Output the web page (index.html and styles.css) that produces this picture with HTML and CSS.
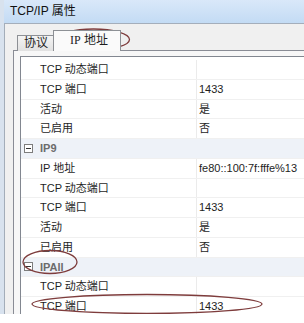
FILE: index.html
```html
<!DOCTYPE html>
<html lang="zh-CN">
<head>
    <meta charset="UTF-8">
    <title>TCP/IP 属性</title>
    <link rel="stylesheet" href="styles.css">
</head>
<body>

<div class="window">
    <div class="titlebar">TCP/IP 属性</div>
    <div class="dialog">
        <div class="tabs">
            <div class="tab">协议</div>
            <div class="tab active"><span class="latin">IP</span> 地址</div>
        </div>
        <div class="panel">
            <div class="grid">
                <div class="row"><div class="name">TCP 动态端口</div><div class="value"></div></div>
                <div class="row"><div class="name">TCP 端口</div><div class="value">1433</div></div>
                <div class="row"><div class="name">活动</div><div class="value">是</div></div>
                <div class="row"><div class="name">已启用</div><div class="value">否</div></div>

                <div class="row category"><span class="toggle"></span>IP9</div>
                <div class="row"><div class="name">IP 地址</div><div class="value">fe80::100:7f:fffe%13</div></div>
                <div class="row"><div class="name">TCP 动态端口</div><div class="value"></div></div>
                <div class="row"><div class="name">TCP 端口</div><div class="value">1433</div></div>
                <div class="row"><div class="name">活动</div><div class="value">是</div></div>
                <div class="row"><div class="name">已启用</div><div class="value">否</div></div>

                <div class="row category"><span class="toggle"></span>IPAll</div>
                <div class="row"><div class="name">TCP 动态端口</div><div class="value"></div></div>
                <div class="row"><div class="name">TCP 端口</div><div class="value">1433</div></div>
            </div>
        </div>
    </div>

    <!-- hand-drawn marks over the screenshot -->
    <svg class="marks" width="304" height="323" viewBox="0 0 304 323">
        <ellipse cx="93.5" cy="39.5" rx="36" ry="10.5"></ellipse>
        <ellipse cx="50" cy="262" rx="27" ry="11.5"></ellipse>
        <ellipse cx="147" cy="304" rx="115" ry="9.5"></ellipse>
    </svg>
</div>

</body>
</html>
```

FILE: styles.css
```css
body {
    margin: 0;
    background-color: #fff;
    font-family: 'Liberation Sans', 'Noto Sans CJK SC', sans-serif;
    color: #1e1e1e;
}
.window {
    position: relative;
    width: 304px;
    height: 314px;
    overflow: hidden;
    border-left: 4px solid #d8e2ee;
    box-sizing: border-box;
}
.titlebar {
    height: 24px;
    line-height: 23px;
    padding-left: 6px;
    font-size: 12px;
    color: #111;
    background: linear-gradient(#d9e8f9, #c3dbf4);
    border-bottom: 1px solid #a4aebb;
    box-sizing: border-box;
}
.dialog {
    height: 290px;
    background-color: #f0f0f0;
    border-left: 1px solid #a3adb9;
    padding-left: 8px;
}
.tabs {
    display: flex;
    align-items: flex-end;
    height: 27px;
    padding-left: 4px;
}
.tab {
    height: 15px;
    line-height: 15px;
    padding: 0 6px;
    font-size: 12px;
    border: 1px solid #8d9095;
    border-bottom: none;
    background: linear-gradient(#f4f4f4, #e1e1e1);
}
.tab.active {
    height: 20px;
    line-height: 18px;
    margin-left: -2px;
    padding: 0 12px 0 16px;
    background: #fafafa;
    position: relative;
    z-index: 1;
}
.latin {
    font-family: 'Liberation Serif', serif;
}
.panel {
    height: 263px;
    background-color: #f7f7f7;
    border-top: 1px solid #898c95;
    border-left: 1px solid #898c95;
    padding: 5px 0 0 6px;
    margin-top: -1px;
}
.grid {
    height: 100%;
    background-color: #fff;
    border-top: 1px solid #828790;
    border-left: 1px solid #828790;
    padding-top: 3px;
    font-size: 11px;
}
.row {
    display: grid;
    grid-template-columns: 175px 1fr;
    height: 19.75px;
    box-sizing: border-box;
    border-bottom: 1px solid #f0f0f0;
    line-height: 18px;
}
.name {
    padding-left: 19px;
}
.value {
    padding-left: 2px;
    border-left: 1px solid #ebebeb;
}
.category {
    display: flex;
    align-items: center;
    gap: 7px;
    padding-left: 3px;
    background-color: #eef2f8;
    color: #6b6b6b;
    font-weight: bold;
}
.toggle {
    position: relative;
    width: 7px;
    height: 7px;
    border: 1px solid #7d7d7d;
    background-color: #fff;
}
.toggle::after {
    content: "";
    position: absolute;
    left: 1px;
    right: 1px;
    top: 3px;
    height: 1px;
    background-color: #333;
}
.marks {
    position: absolute;
    left: -4px;
    top: 0;
    pointer-events: none;
}
.marks ellipse {
    fill: none;
    stroke: #7e3c3c;
    stroke-width: 1.3;
}
```
